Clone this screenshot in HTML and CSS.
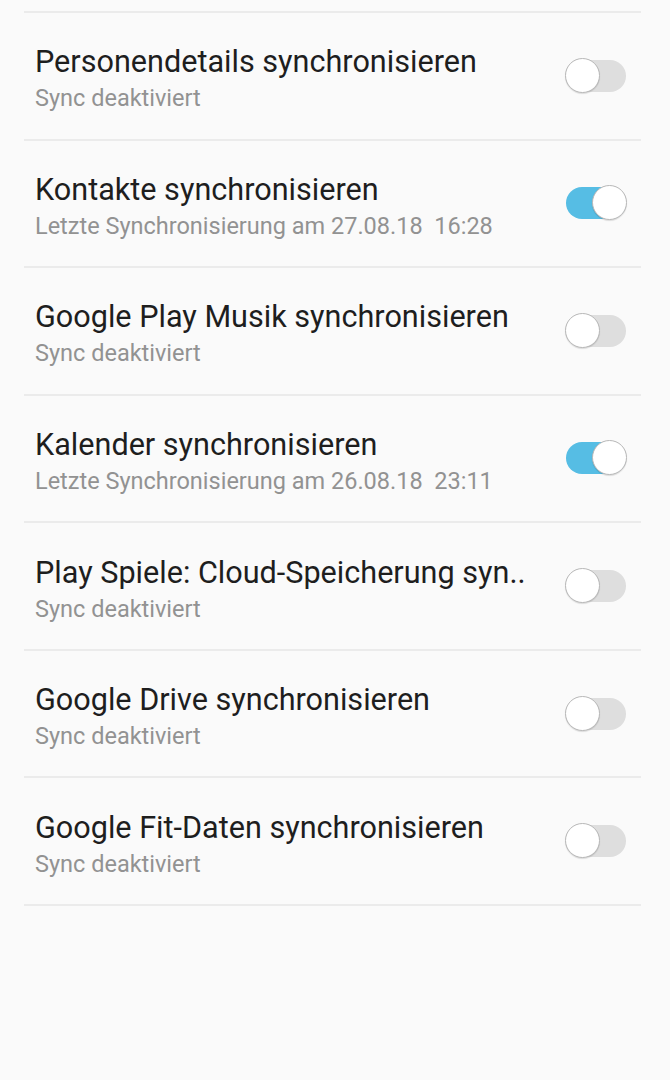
FILE: index.html
```html
<!DOCTYPE html>
<html lang="de">
<head>
<meta charset="utf-8">
<link rel="stylesheet" href="styles.css">
</head>
<body>
<div class="list">
  <div class="row">
    <div class="text"><div class="title">Personendetails synchronisieren</div><div class="sub">Sync deaktiviert</div></div>
    <div class="switch"><div class="knob"></div></div>
  </div>
  <div class="row">
    <div class="text"><div class="title">Kontakte synchronisieren</div><div class="sub">Letzte Synchronisierung am 27.08.18&nbsp; 16:28</div></div>
    <div class="switch on"><div class="knob"></div></div>
  </div>
  <div class="row">
    <div class="text"><div class="title">Google Play Musik synchronisieren</div><div class="sub">Sync deaktiviert</div></div>
    <div class="switch"><div class="knob"></div></div>
  </div>
  <div class="row">
    <div class="text"><div class="title">Kalender synchronisieren</div><div class="sub">Letzte Synchronisierung am 26.08.18&nbsp; 23:11</div></div>
    <div class="switch on"><div class="knob"></div></div>
  </div>
  <div class="row">
    <div class="text"><div class="title">Play Spiele: Cloud-Speicherung syn..</div><div class="sub">Sync deaktiviert</div></div>
    <div class="switch"><div class="knob"></div></div>
  </div>
  <div class="row">
    <div class="text"><div class="title">Google Drive synchronisieren</div><div class="sub">Sync deaktiviert</div></div>
    <div class="switch"><div class="knob"></div></div>
  </div>
  <div class="row">
    <div class="text"><div class="title">Google Fit-Daten synchronisieren</div><div class="sub">Sync deaktiviert</div></div>
    <div class="switch"><div class="knob"></div></div>
  </div>
</div>
</body>
</html>
```

FILE: styles.css
```css
html, body {
  margin: 0;
  padding: 0;
  background: #fafafa;
  height: 1080px;
  overflow: hidden;
}
body {
  font-family: Roboto, "Liberation Sans", sans-serif;
}
.list {
  margin: 11px 29px 0 24px;
  border-top: 2px solid #ebebeb;
}
.row {
  height: 125.57px;
  border-bottom: 2px solid #ebebeb;
  display: flex;
  align-items: center;
  padding: 0 15px 0 11px;
}
.text {
  flex: 1;
  min-width: 0;
  padding-top: 9px;
}
.title {
  font-size: 30.6px;
  color: #1e1e1e;
  line-height: 36px;
  white-space: nowrap;
}
.sub {
  font-size: 23.5px;
  color: #929292;
  line-height: 36px;
}
.switch {
  position: relative;
  width: 60px;
  height: 32px;
  border-radius: 16px;
  background: #dedede;
  flex: none;
}
.switch.on {
  background: #56bde4;
}
.knob {
  position: absolute;
  top: -2px;
  left: -1px;
  width: 33px;
  height: 33px;
  border-radius: 50%;
  background: #fff;
  border: 1px solid #b8b8b8;
  box-shadow: 0 1px 1px rgba(0,0,0,0.12);
}
.switch.on .knob {
  left: auto;
  right: -1px;
}
```
